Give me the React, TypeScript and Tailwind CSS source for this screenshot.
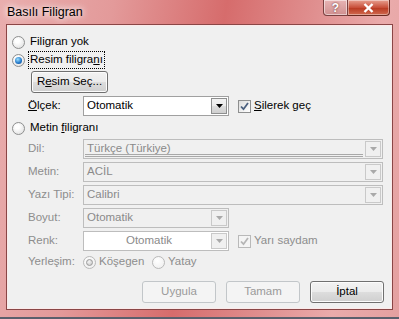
import React from "react";

function Radio({ checked = false, disabled = false }: { checked?: boolean; disabled?: boolean }) {
  return (
    <span
      className={`flex h-[13px] w-[13px] shrink-0 items-center justify-center rounded-full border ${
        disabled
          ? "border-[#b9b9b9] bg-[radial-gradient(circle_at_40%_35%,#ffffff,#ececec)]"
          : "border-[#8e8f8f] bg-[radial-gradient(circle_at_40%_35%,#ffffff_20%,#d9d9d9)]"
      }`}
    >
      {checked && (
        <span
          className={`h-[7px] w-[7px] rounded-full ${
            disabled
              ? "border border-[#9a9a9a] bg-[radial-gradient(circle_at_40%_35%,#f4f4f4,#c4c4c4)]"
              : "bg-[radial-gradient(circle_at_40%_35%,#9be0ff,#1f74c7_60%,#0a3f82)]"
          }`}
        />
      )}
    </span>
  );
}

function Check({ disabled = false }: { disabled?: boolean }) {
  return (
    <span
      className={`flex h-[13px] w-[13px] shrink-0 items-center justify-center border ${
        disabled ? "border-[#b9b9b9] bg-[#f4f4f4]" : "border-[#8e8f8f] bg-[linear-gradient(135deg,#dcdcdc,#ffffff)]"
      }`}
    >
      <svg width="9" height="9" viewBox="0 0 9 9">
        <path
          d="M1 4.5 L3.5 7.2 L8 1"
          fill="none"
          stroke={disabled ? "#b5b5b5" : "#4a5f7e"}
          strokeWidth="1.8"
        />
      </svg>
    </span>
  );
}

function DropBtn({ disabled = false }: { disabled?: boolean }) {
  return (
    <span
      className={`flex h-full w-[16px] shrink-0 items-center justify-center border ${
        disabled
          ? "border-[#c9c9c9] bg-[#f0f0f0]"
          : "border-[#8e8f8f] bg-[linear-gradient(#f2f2f2_0%,#ebebeb_50%,#dddddd_51%,#cfcfcf_100%)]"
      }`}
    >
      <svg width="7" height="4" viewBox="0 0 7 4">
        <path d="M0 0 L7 0 L3.5 4 Z" fill={disabled ? "#a9a9a9" : "#000"} />
      </svg>
    </span>
  );
}

function Combo({
  w,
  text,
  disabled = false,
  white = false,
  center = false,
  lines = false,
}: {
  w: string;
  text: string;
  disabled?: boolean;
  white?: boolean;
  center?: boolean;
  lines?: boolean;
}) {
  return (
    <div
      className={`flex h-[20px] ${w} items-stretch border p-px ${
        disabled ? "border-[#bdbdbd]" : "border-[#a0a0a0]"
      } ${white ? "bg-white" : disabled ? "bg-[#f0f0f0]" : "bg-white"}`}
    >
      <div
        className={`relative flex flex-1 items-center pl-[2px] ${center ? "justify-center" : ""} ${
          disabled ? "text-[#8a8a8a]" : "text-black"
        }`}
      >
        {text}
        {lines && (
          <div className="absolute bottom-[0px] left-0 right-[2px] h-[3px] border-y border-[#a8a8a8]" />
        )}
      </div>
      <DropBtn disabled={disabled} />
    </div>
  );
}

function Btn({
  w,
  label,
  disabled = false,
  children,
}: {
  w: string;
  label?: string;
  disabled?: boolean;
  children?: React.ReactNode;
}) {
  return (
    <div
      className={`flex h-[22px] ${w} items-center justify-center rounded-[3px] border ${
        disabled
          ? "border-[#c2c6c9] bg-[#f4f4f4] text-[#9a9a9a]"
          : "border-[#707070] bg-[linear-gradient(#f2f2f2_0%,#ebebeb_50%,#dddddd_51%,#cfcfcf_100%)] text-black shadow-[inset_0_0_0_1px_#fcfcfc]"
      }`}
    >
      {children ?? label}
    </div>
  );
}

function Label({ children }: { children: React.ReactNode }) {
  return <span className="w-[55px] shrink-0 text-[#8d8d8d]">{children}</span>;
}

export default function App() {
  return (
    <div className="relative flex h-[319px] w-[399px] flex-col overflow-hidden bg-[linear-gradient(100deg,#e9aeae_0%,#e39a9a_25%,#d66c6c_50%,#e09090_70%,#eaabab_85%,#e4a0a0_100%)] font-['Liberation_Sans',Arial,sans-serif]">
      {/* title bar */}
      <div className="flex h-[24px] shrink-0 items-center pl-[7px] text-[12.5px] text-black">
        <span className="[text-shadow:0_0_6px_#ffffff,0_0_8px_#ffffff]">Basılı Filigran</span>
      </div>
      <div className="absolute right-[9px] top-0 flex h-[16px]">
        <div className="flex w-[25px] items-center justify-center rounded-bl-[4px] border border-t-0 border-[#7a4040] bg-[linear-gradient(#e8b4b4,#cf8f8f)] text-[12px] font-bold text-white shadow-[inset_0_0_0_1px_rgba(255,255,255,0.5)] [text-shadow:0_0_2px_#5a2020]">
          ?
        </div>
        <div className="flex w-[42px] items-center justify-center rounded-br-[4px] border border-l-0 border-t-0 border-[#6a2a20] bg-[linear-gradient(#e8a090,#c8503a_50%,#b83820_51%,#d06a50)] shadow-[inset_0_0_0_1px_rgba(255,255,255,0.4)]">
          <svg width="11" height="10" viewBox="0 0 11 10">
            <path d="M1.5 1 L9.5 9 M9.5 1 L1.5 9" stroke="#ffffff" strokeWidth="2.4" />
          </svg>
        </div>
      </div>

      {/* client */}
      <div className="mx-[6px] h-[286px] shrink-0 border border-[#8a4646]">
        <div className="h-full border border-[#fbeaea]">
          <div className="flex h-full flex-col bg-[#f0f0f0] text-[11.5px] leading-none text-black">
            <div className="mt-[7px] flex h-[18px] items-center pl-[4px]">
              <Radio />
              <span className="ml-[5px]">Filigran yok</span>
            </div>
            <div className="flex h-[18px] items-center pl-[4px]">
              <Radio checked />
              <span className="ml-[3px] border border-dotted border-black px-[1px] py-[2px]">
                Resim filigra<span className="underline">n</span>ı
              </span>
            </div>
            <div className="mt-[2px] flex pl-[23px]">
              <Btn w="w-[77px]">
                R<span className="underline">e</span>sim Seç...
              </Btn>
            </div>
            <div className="mt-[3px] flex h-[20px] items-center pl-[20px]">
              <span className="w-[55px] shrink-0">
                <span className="underline">Ö</span>lçek:
              </span>
              <Combo w="w-[146px]" text="Otomatik" />
              <span className="ml-[9px]">
                <Check />
              </span>
              <span className="ml-[3px]">
                <span className="underline">S</span>ilerek geç
              </span>
            </div>
            <div className="mt-[3px] flex h-[18px] items-center pl-[4px]">
              <Radio />
              <span className="ml-[5px]">
                Metin <span className="underline">f</span>iligranı
              </span>
            </div>
            <div className="mt-[2px] flex h-[20px] items-center pl-[20px]">
              <Label>Dil:</Label>
              <Combo w="w-[300px]" text="Türkçe (Türkiye)" disabled lines />
            </div>
            <div className="mt-[3px] flex h-[20px] items-center pl-[20px]">
              <Label>Metin:</Label>
              <Combo w="w-[300px]" text="ACİL" disabled />
            </div>
            <div className="mt-[3px] flex h-[20px] items-center pl-[20px]">
              <Label>Yazı Tipi:</Label>
              <Combo w="w-[300px]" text="Calibri" disabled />
            </div>
            <div className="mt-[3px] flex h-[20px] items-center pl-[20px]">
              <Label>Boyut:</Label>
              <Combo w="w-[146px]" text="Otomatik" disabled />
            </div>
            <div className="mt-[3px] flex h-[20px] items-center pl-[20px]">
              <Label>Renk:</Label>
              <Combo w="w-[146px]" text="Otomatik" disabled white center />
              <span className="ml-[9px]">
                <Check disabled />
              </span>
              <span className="ml-[3px] text-[#8d8d8d]">Yarı saydam</span>
            </div>
            <div className="mt-[2px] flex h-[18px] items-center pl-[20px] text-[#8d8d8d]">
              <span className="w-[55px] shrink-0">Yerleşim:</span>
              <Radio checked disabled />
              <span className="ml-[3px] w-[53px]">Köşegen</span>
              <Radio disabled />
              <span className="ml-[3px]">Yatay</span>
            </div>
            <div className="mt-[10px] flex justify-end gap-[10px] pr-[7px]">
              <Btn w="w-[74px]" label="Uygula" disabled />
              <Btn w="w-[74px]" label="Tamam" disabled />
              <Btn w="w-[74px]" label="İptal" />
            </div>
          </div>
        </div>
      </div>
      <div className="mt-auto h-[2px] bg-[#5b5f6c]" />
    </div>
  );
}
